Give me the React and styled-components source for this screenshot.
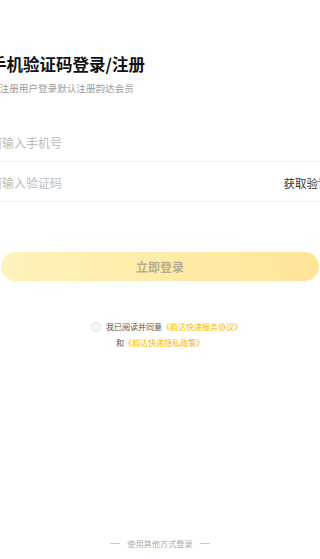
import React, { useState } from "react";
import styled, { createGlobalStyle } from "styled-components";

const GlobalStyle = createGlobalStyle`
  html, body {
    margin: 0;
    padding: 0;
    background: #fff;
    overflow: hidden;
  }
  body {
    font-family: "Noto Sans CJK SC", "Noto Sans", sans-serif;
  }
`;

function App() {
  const [checked, setChecked] = useState(false);

  return (
    <Page>
      <GlobalStyle />
      <Header>
        <Title>手机验证码登录/注册</Title>
        <Sub>未注册用户登录默认注册韵达会员</Sub>
      </Header>
      <Form>
        <Row>
          <Input placeholder="请输入手机号" />
        </Row>
        <Row>
          <Input placeholder="请输入验证码" />
          <CodeBtn>获取验证码</CodeBtn>
        </Row>
      </Form>
      <LoginBtn>立即登录</LoginBtn>
      <Agree>
        <Line>
          <Radio $on={checked} onClick={() => setChecked(!checked)} />
          我已阅读并同意<Link>《韵达快递服务协议》</Link>
        </Line>
        <Line $indent>
          和<Link>《韵达快递隐私政策》</Link>
        </Line>
      </Agree>
      <Footer>
        <Dash />
        使用其他方式登录
        <Dash />
      </Footer>
    </Page>
  );
}

export default App;

const Page = styled.div`
  height: 559px;
  display: flex;
  flex-direction: column;
  background: #fff;
  overflow: hidden;
`;
const Header = styled.div`
  margin-left: -10px;
  padding-top: 55px;
`;
const Title = styled.h1`
  margin: 0;
  font-size: 16.5px;
  line-height: 19px;
  font-weight: 700;
  color: #111;
`;
const Sub = styled.div`
  margin-top: 7px;
  font-size: 9.6px;
  line-height: 14px;
  color: #999;
`;
const Form = styled.div`
  margin-top: 27px;
  margin-left: -10px;
  width: 351px;
`;
const Row = styled.div`
  height: 39px;
  display: flex;
  align-items: center;
  border-bottom: 1px solid #f0f0f0;
`;
const Input = styled.input`
  flex: 1;
  min-width: 0;
  border: none;
  outline: none;
  padding: 2px 0 0;
  font-family: inherit;
  font-size: 12px;
  color: #333;
  background: transparent;
  &::placeholder {
    color: #bbb;
  }
`;
const CodeBtn = styled.span`
  font-size: 11.5px;
  color: #333;
  padding-top: 2px;
`;
const LoginBtn = styled.div`
  margin: 50px auto 0;
  width: 318px;
  height: 29px;
  border-radius: 15px;
  background: linear-gradient(90deg, #fff2bd 0%, #ffeca8 50%, #ffe49a 100%);
  display: flex;
  align-items: center;
  justify-content: center;
  font-size: 12px;
  font-weight: 700;
  color: #b5ad93;
`;
const Agree = styled.div`
  margin: 38px 0 0 91px;
  font-size: 8px;
  line-height: 16px;
  color: #555;
`;
const Line = styled.div`
  display: flex;
  align-items: center;
  padding-left: ${(p) => (p.$indent ? "25px" : "0")};
`;
const Radio = styled.span`
  width: 10px;
  height: 10px;
  margin-right: 5px;
  border-radius: 50%;
  border: 1px solid #e2e2e2;
  background: ${(p) => (p.$on ? "#ffc600" : "#f6f6f6")};
  box-sizing: border-box;
`;
const Link = styled.span`
  color: #f7b500;
`;
const Footer = styled.div`
  margin-top: auto;
  padding-bottom: 10px;
  display: flex;
  align-items: center;
  justify-content: center;
  gap: 7px;
  font-size: 8.2px;
  line-height: 12px;
  color: #aaa;
`;
const Dash = styled.span`
  width: 10px;
  height: 1px;
  background: #ccc;
`;
